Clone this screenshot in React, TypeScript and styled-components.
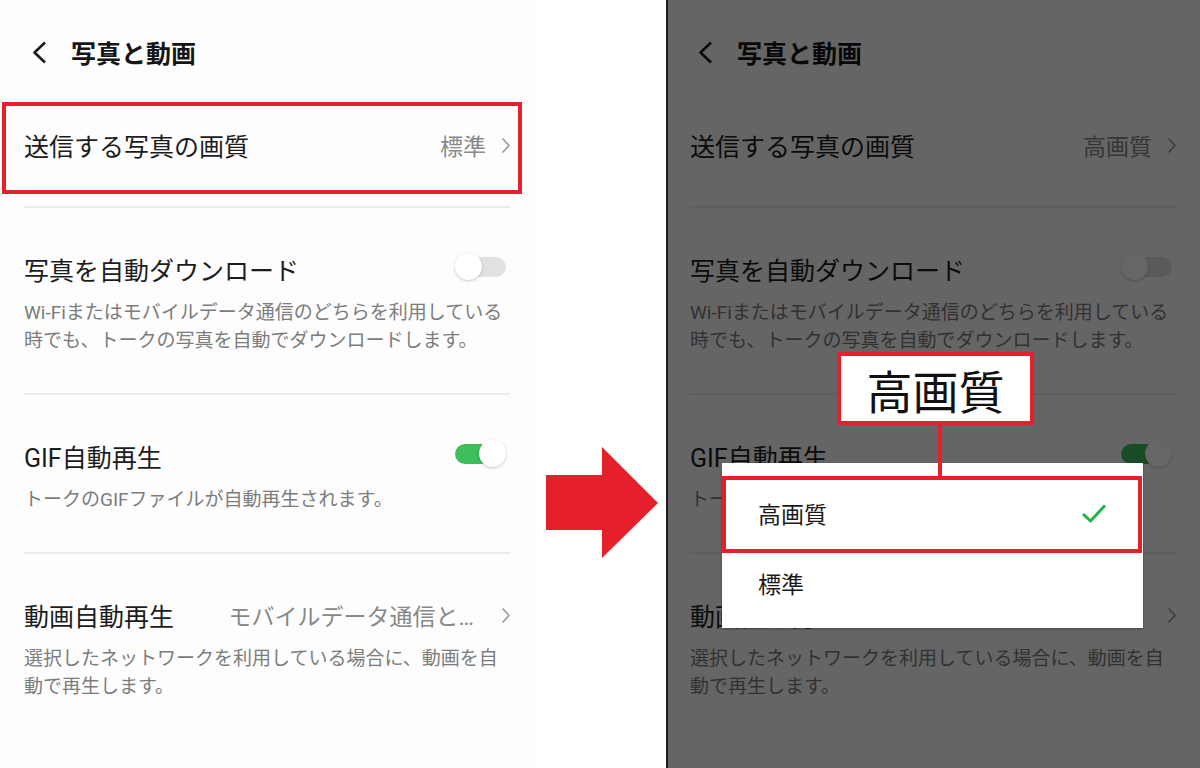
import React from 'react';
import styled, { createGlobalStyle, css } from 'styled-components';

const RED = '#e3202b';

const GlobalStyle = createGlobalStyle`
  html, body {
    margin: 0;
    padding: 0;
    background: #ffffff;
    font-family: Roboto, "Noto Sans CJK JP", "Noto Sans", sans-serif;
  }
`;

/* ===== page ===== */
const Page = styled.div`
  display: flex;
  width: 1200px;
  height: 768px;
  overflow: hidden;
  background: #ffffff;
`;
const Panel = styled.section<{ $dim?: boolean }>`
  position: relative;
  width: 534px;
  flex-shrink: 0;
  background: #fdfdfd;
  overflow: hidden;
  ${({ $dim }) =>
    $dim &&
    css`
      box-shadow: inset 2px 0 0 #4a4a4a;
    `}
`;
const Middle = styled.div`
  width: 132px;
  flex-shrink: 0;
  padding: 447px 0 0 12px;
  box-sizing: border-box;
`;

/* ===== screen ===== */
const Screen = styled.div`
  padding: 0 24px;
`;
const Header = styled.header`
  height: 100px;
  padding-top: 4px;
  box-sizing: border-box;
  display: flex;
  align-items: center;
  gap: 24px;
  padding-left: 8px;
`;
const HeaderTitle = styled.h1`
  margin: 0;
  font-size: 25px;
  font-weight: 700;
  color: #151515;
`;
const Section = styled.div<{ $compact?: boolean; $marked?: boolean }>`
  position: relative;
  padding: ${({ $compact }) => ($compact ? '28px 0 44px' : '44px 0 38px')};
  ${({ $marked }) =>
    $marked &&
    css`
      &::after {
        content: '';
        position: absolute;
        left: -22px;
        right: -12px;
        top: 2px;
        bottom: 12px;
        border: 4px solid ${RED};
      }
    `}
`;
const TitleRow = styled.div`
  display: flex;
  align-items: center;
  justify-content: space-between;
  height: 34px;
`;
const Title = styled.span`
  font-size: 25px;
  color: #1c1c1c;
  white-space: nowrap;
`;
const Value = styled.span`
  display: flex;
  align-items: center;
  gap: 16px;
  font-size: 23px;
  color: #888888;
  white-space: nowrap;
`;
const Ellipsis = styled.span`
  margin-right: 12px;
`;
const Desc = styled.p`
  margin: 13px 0 0;
  font-size: 19px;
  line-height: 28px;
  color: #7c7c7c;
  white-space: nowrap;
`;
const Divider = styled.hr`
  margin: 0;
  border: none;
  height: 2px;
  background: #ececec;
`;

/* ===== toggle ===== */
const ToggleBox = styled.span`
  position: relative;
  width: 51px;
  height: 28px;
  margin-right: 4px;
  margin-top: -4px;
`;
const Track = styled.span<{ $on?: boolean }>`
  position: absolute;
  top: 4px;
  width: 36px;
  height: 20px;
  border-radius: 10px;
  background: ${({ $on }) => ($on ? '#3ebd5c' : '#e1e1e1')};
  ${({ $on }) => ($on ? 'left: 0;' : 'right: 0;')}
`;
const Thumb = styled.span<{ $on?: boolean }>`
  position: absolute;
  top: 0;
  width: 27px;
  height: 27px;
  border-radius: 50%;
  background: #ffffff;
  box-shadow: 0 1px 3px rgba(0, 0, 0, 0.22);
  ${({ $on }) => ($on ? 'right: 0;' : 'left: 0;')}
`;

const Toggle = ({ on }: { on?: boolean }) => (
  <ToggleBox>
    <Track $on={on} />
    <Thumb $on={on} />
  </ToggleBox>
);

const Chevron = () => (
  <svg width="8" height="15" viewBox="0 0 8 15" fill="none">
    <polyline points="1,1 7,7.5 1,14" stroke="#9a9a9a" strokeWidth="1.7" strokeLinejoin="round" strokeLinecap="round" />
  </svg>
);

const Back = () => (
  <svg width="15" height="23" viewBox="0 0 15 23" fill="none">
    <polyline points="13,1.5 2.5,11.5 13,21.5" stroke="#1c1c1c" strokeWidth="2.6" strokeLinejoin="round" />
  </svg>
);

const Settings: React.FC<{ quality: string; marked?: boolean }> = ({ quality, marked }) => (
  <Screen>
    <Header>
      <Back />
      <HeaderTitle>写真と動画</HeaderTitle>
    </Header>

    <Section $compact $marked={marked}>
      <TitleRow>
        <Title>送信する写真の画質</Title>
        <Value>
          {quality}
          <Chevron />
        </Value>
      </TitleRow>
    </Section>
    <Divider />

    <Section>
      <TitleRow>
        <Title>写真を自動ダウンロード</Title>
        <Toggle />
      </TitleRow>
      <Desc>
        Wi-Fiまたはモバイルデータ通信のどちらを利用している
        <br />
        時でも、トークの写真を自動でダウンロードします。
      </Desc>
    </Section>
    <Divider />

    <Section>
      <TitleRow>
        <Title>GIF自動再生</Title>
        <Toggle on />
      </TitleRow>
      <Desc>トークのGIFファイルが自動再生されます。</Desc>
    </Section>
    <Divider />

    <Section>
      <TitleRow>
        <Title>動画自動再生</Title>
        <Value>
          <span>
            モバイルデータ通信と<Ellipsis>…</Ellipsis>
          </span>
          <Chevron />
        </Value>
      </TitleRow>
      <Desc>
        選択したネットワークを利用している場合に、動画を自
        <br />
        動で再生します。
      </Desc>
    </Section>
  </Screen>
);

/* ===== overlay parts ===== */
const Dim = styled.div`
  position: absolute;
  inset: 0;
  background: rgba(0, 0, 0, 0.6);
`;
const Menu = styled.div`
  position: absolute;
  left: 56px;
  top: 463px;
  width: 421px;
  padding: 15px 0 10px;
  background: #ffffff;
  box-shadow: 0 1px 2px rgba(0, 0, 0, 0.35);
`;
const MenuItem = styled.div<{ $marked?: boolean }>`
  position: relative;
  height: 70px;
  display: flex;
  align-items: center;
  justify-content: space-between;
  padding: 0 36px;
  font-size: 23px;
  color: #1a1a1a;
  ${({ $marked }) =>
    $marked &&
    css`
      &::after {
        content: '';
        position: absolute;
        left: 0;
        right: 1px;
        top: -2px;
        bottom: -5px;
        border: 4px solid ${RED};
      }
    `}
`;
const Callout = styled.div`
  position: absolute;
  left: 171px;
  top: 352px;
  width: 197px;
  height: 73px;
  box-sizing: border-box;
  border: 4px solid ${RED};
  background: #ffffff;
  display: flex;
  align-items: center;
  justify-content: center;
  font-size: 46px;
  font-weight: 400;
  color: #111111;
`;
const Leader = styled.div`
  position: absolute;
  left: 272px;
  top: 424px;
  width: 4px;
  height: 53px;
  background: ${RED};
`;

const Check = () => (
  <svg width="26" height="21" viewBox="0 0 26 21" fill="none">
    <polyline points="2,11 9.5,18 24,2.5" stroke="#1fb44a" strokeWidth="3" strokeLinejoin="round" />
  </svg>
);

const Arrow = () => (
  <svg width="112" height="111" viewBox="0 0 112 111">
    <polygon points="0,28 56,28 56,0 112,56 56,111 56,83 0,83" fill="#e6202a" />
  </svg>
);

export default function App() {
  return (
    <>
      <GlobalStyle />
      <Page>
        <Panel>
          <Settings quality="標準" marked />
        </Panel>

        <Middle>
          <Arrow />
        </Middle>

        <Panel $dim>
          <Settings quality="高画質" />
          <Dim />
          <Menu>
            <MenuItem $marked>
              高画質
              <Check />
            </MenuItem>
            <MenuItem>標準</MenuItem>
          </Menu>
          <Leader />
          <Callout>高画質</Callout>
        </Panel>
      </Page>
    </>
  );
}
